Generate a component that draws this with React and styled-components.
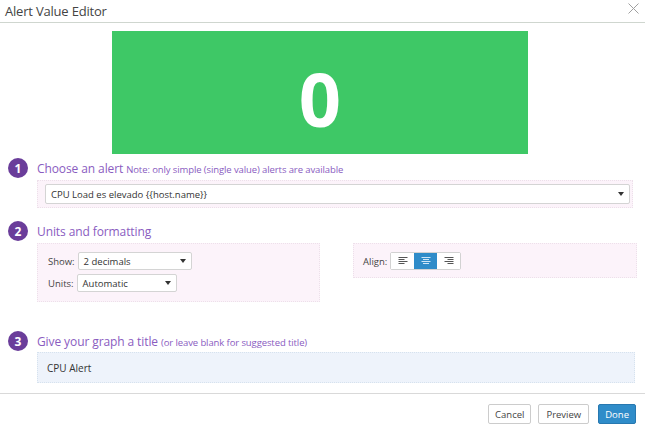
import React from "react";
import styled, { createGlobalStyle } from "styled-components";

const Global = createGlobalStyle`
  html, body { margin: 0; padding: 0; background: #fff; }
  body { font-family: "Open Sans", "Noto Sans", sans-serif; color: #333; }
  * { box-sizing: border-box; }
`;

const Dialog = styled.div`
  width: 645px;
  height: 431px;
  background: #fff;
  display: flex;
  flex-direction: column;
`;

const Header = styled.div`
  height: 23px;
  display: flex;
  align-items: center;
  justify-content: space-between;
  padding: 0 6px 1px 5px;
  border-bottom: 1px solid #cfd6cf;
`;

const Title = styled.div`
  font-size: 13px;
  color: #444;
  letter-spacing: -0.2px;
`;

const Close = styled.div`
  align-self: flex-start;
  margin-top: 3px;
  color: #a0a0a0;
  display: flex;
`;

const Preview = styled.div`
  margin: 8px 0 0 112px;
  width: 416px;
  height: 123px;
  background: #3ec866;
  display: flex;
  align-items: center;
  justify-content: center;
  color: #fff;
  font-family: "Open Sans", sans-serif;
  font-weight: 700;
  font-size: 74px;
  line-height: 1;
  padding-top: 12px;
`;

const Section = styled.div`
  margin-top: ${p => p.$mt}px;
  display: flex;
  flex-direction: column;
`;

const StepRow = styled.div`
  display: flex;
  align-items: center;
  height: 20px;
  padding-left: 8px;
`;

const Circle = styled.div`
  width: 20px;
  height: 20px;
  border-radius: 50%;
  background: #6a3d9a;
  color: #fff;
  font-size: 12px;
  font-weight: 700;
  display: flex;
  align-items: center;
  justify-content: center;
  margin-right: 9px;
`;

const Heading = styled.div`
  font-size: 12px;
  color: #8a5cbf;
  letter-spacing: -0.1px;
`;

const Note = styled.span`
  font-size: 9.5px;
  color: #8a5cbf;
  margin-left: 3px;
`;

const Panel = styled.div`
  margin-top: ${p => p.$mt || 2}px;
  margin-left: 37px;
  width: ${p => p.$w}px;
  height: ${p => p.$h}px;
  background: ${p => (p.$blue ? "#eef3fb" : "#fcf3fa")};
  border: 1px dotted ${p => (p.$blue ? "#d6e2ee" : "#ede0ea")};
  padding: ${p => p.$pad || "0"};
`;

const PanelRow = styled.div`
  display: flex;
  gap: 33px;
  align-items: flex-start;
`;

const SubPanel = styled(Panel)`
  margin-left: ${p => p.$ml}px;
`;

const Select = styled.div`
  width: ${p => p.$w}px;
  height: ${p => p.$h || 18}px;
  background: #fff;
  border: 1px solid #d4d4d4;
  border-radius: 2px;
  display: flex;
  align-items: center;
  justify-content: space-between;
  padding: 0 5px 0 5px;
  font-size: 9.5px;
  color: #333;
`;

const Caret = styled.span`
  width: 0;
  height: 0;
  border-left: 3px solid transparent;
  border-right: 3px solid transparent;
  border-top: 4px solid #333;
`;

const FieldRow = styled.div`
  display: flex;
  align-items: center;
  margin-bottom: 4px;
`;

const Label = styled.span`
  font-size: 9.5px;
  color: #444;
  margin-right: 3px;
`;

const BtnGroup = styled.div`
  display: flex;
  border: 1px solid #d2d2d2;
  border-radius: 2px;
`;

const AlignBtn = styled.div`
  width: 23px;
  height: 16px;
  display: flex;
  align-items: center;
  justify-content: center;
  background: ${p => (p.$active ? "#2f8cc9" : "#fff")};
  color: ${p => (p.$active ? "#cfe6f7" : "#555")};
`;

const TitleText = styled.div`
  font-size: 10px;
  color: #333;
`;

const Footer = styled.div`
  margin-top: 10px;
  border-top: 1px solid #d9d9d9;
  padding: 10px 9px 0 0;
  display: flex;
  justify-content: flex-end;
  gap: 7px;
`;

const Button = styled.div`
  height: 20px;
  padding: 0 ${p => p.$px}px;
  font-size: 9.5px;
  display: flex;
  align-items: center;
  border-radius: 2px;
  border: 1px solid ${p => (p.$primary ? "#2778b0" : "#ccc")};
  background: ${p => (p.$primary ? "#2f8cc9" : "#fff")};
  color: ${p => (p.$primary ? "#fff" : "#444")};
  margin-left: ${p => p.$ml || 0}px;
`;

const AlignIcon = ({ mode }) => {
  const lens = [9, 6, 9, 6];
  return (
    <svg width="10" height="8" viewBox="0 0 10 8">
      {lens.map((l, i) => {
        const x = mode === "left" ? 0.5 : mode === "right" ? 9.5 - l : (10 - l) / 2;
        return <rect key={i} x={x} y={i * 2} width={l} height="1" fill="currentColor" />;
      })}
    </svg>
  );
};

export default function App() {
  return (
    <>
      <Global />
      <Dialog>
        <Header>
          <Title>Alert Value Editor</Title>
          <Close aria-label="Close">
            <svg width="11" height="11" viewBox="0 0 11 11">
              <path d="M0.5 0.5 L10.5 10.5 M10.5 0.5 L0.5 10.5" stroke="currentColor" strokeWidth="1" fill="none" />
            </svg>
          </Close>
        </Header>
        <Preview>0</Preview>

        <Section $mt={4}>
          <StepRow>
            <Circle>1</Circle>
            <Heading>
              Choose an alert<Note>Note: only simple (single value) alerts are available</Note>
            </Heading>
          </StepRow>
          <Panel $w={596} $h={28} $pad="3px 0 0 7px">
            <Select $w={585} $h={20}>
              <span>CPU Load es elevado {"{{host.name}}"}</span>
              <Caret />
            </Select>
          </Panel>
        </Section>

        <Section $mt={13}>
          <StepRow>
            <Circle>2</Circle>
            <Heading>Units and formatting</Heading>
          </StepRow>
          <PanelRow>
            <Panel $w={283} $h={59} $pad="8px 0 0 10px">
              <FieldRow>
                <Label>Show:</Label>
                <Select $w={114}>
                  <span>2 decimals</span>
                  <Caret />
                </Select>
              </FieldRow>
              <FieldRow>
                <Label>Units:</Label>
                <Select $w={100}>
                  <span>Automatic</span>
                  <Caret />
                </Select>
              </FieldRow>
            </Panel>
            <SubPanel $ml={0} $w={284} $h={35} $pad="8px 0 0 9px">
              <FieldRow>
                <Label>Align:</Label>
                <BtnGroup>
                  <AlignBtn><AlignIcon mode="left" /></AlignBtn>
                  <AlignBtn $active><AlignIcon mode="center" /></AlignBtn>
                  <AlignBtn><AlignIcon mode="right" /></AlignBtn>
                </BtnGroup>
              </FieldRow>
            </SubPanel>
          </PanelRow>
        </Section>

        <Section $mt={29}>
          <StepRow>
            <Circle>3</Circle>
            <Heading>
              Give your graph a title<Note>(or leave blank for suggested title)</Note>
            </Heading>
          </StepRow>
          <Panel $blue $mt={1} $w={598} $h={31} $pad="8px 0 0 9px">
            <TitleText>CPU Alert</TitleText>
          </Panel>
        </Section>

        <Footer>
          <Button $px={6}>Cancel</Button>
          <Button $px={7}>Preview</Button>
          <Button $primary $px={6} $ml={2}>Done</Button>
        </Footer>
      </Dialog>
    </>
  );
}
